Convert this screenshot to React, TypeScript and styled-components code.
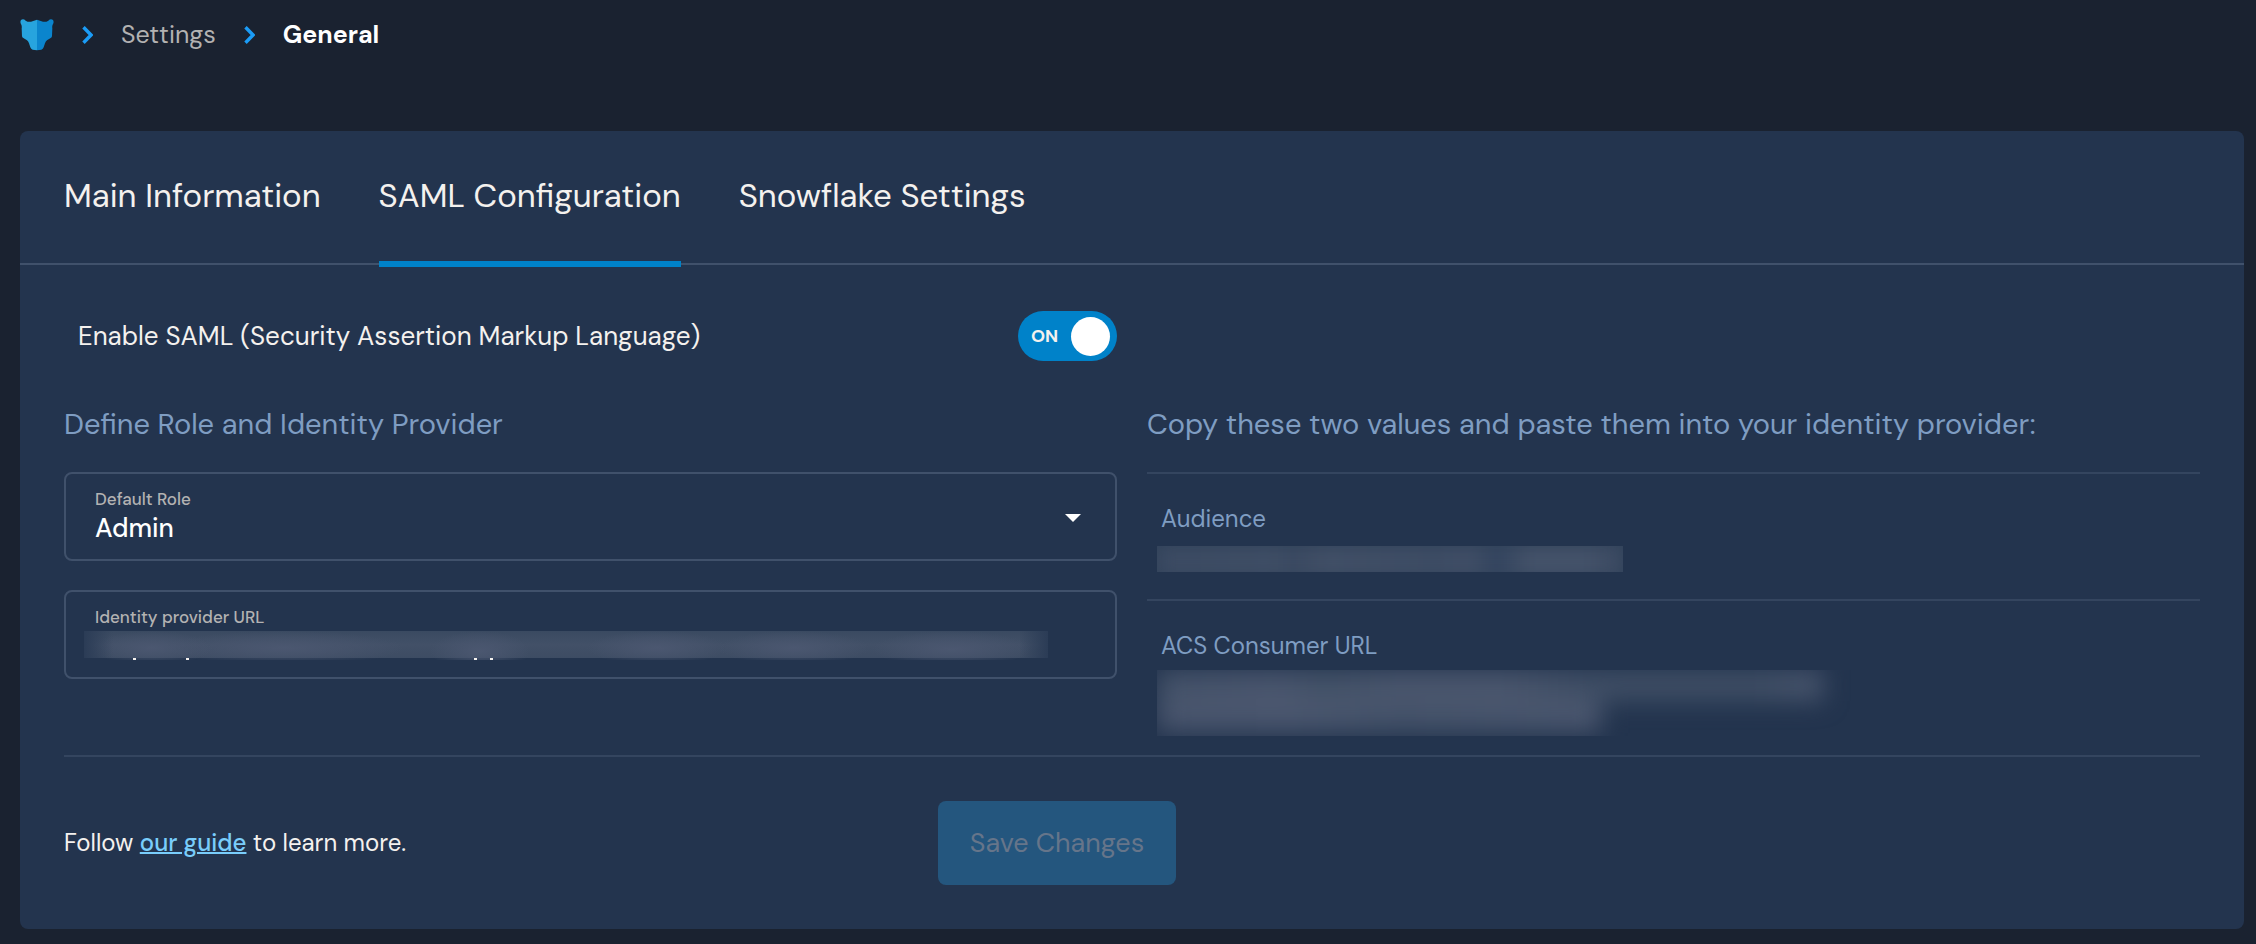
import React, { useState } from 'react';
import styled, { createGlobalStyle } from 'styled-components';

const color = {
  page: '#1a2230',
  card: '#23344e',
  line: '#34455f',
  border: '#40516b',
  accent: '#0082c9',
  chevron: '#1b9cf6',
  text: '#f4f1ee',
  muted: '#b3b2b2',
  heading: '#7f9dc2',
  link: '#79cdfb',
};

const GlobalStyle = createGlobalStyle`
  *, *::before, *::after { box-sizing: border-box; }
  body {
    margin: 0;
    background: ${color.page};
    color: ${color.text};
    font-family: "DM Sans", Inter, "Liberation Sans", sans-serif;
  }
  button, input, select { font: inherit; color: inherit; }
`;

const Page = styled.div`
  min-height: 100vh;
  padding: 0 12px 15px 20px;
`;

const Breadcrumb = styled.nav`
  display: flex;
  align-items: center;
  gap: 28px;
  height: 70px;
  margin-bottom: 61px;
  font-size: 25px;
  line-height: 32px;
`;

const Crumb = styled.a`
  display: flex;
  color: ${color.muted};
  text-decoration: none;
`;

const CurrentCrumb = styled.span`
  color: #fff;
  font-weight: 700;
`;

const Card = styled.main`
  background: ${color.card};
  border-radius: 8px;
`;

const Tabs = styled.div`
  display: flex;
  gap: 58px;
  padding: 0 44px;
  border-bottom: 2px solid ${color.border};
`;

const Tab = styled.button<{ $active: boolean }>`
  margin: 0 0 -4px;
  padding: 45px 0;
  border: 0;
  border-bottom: 6px solid ${(p) => (p.$active ? color.accent : 'transparent')};
  background: none;
  font-size: 33px;
  line-height: 40px;
  white-space: nowrap;
  cursor: pointer;
`;

const Columns = styled.div`
  display: grid;
  grid-template-columns: 1fr 1fr;
  column-gap: 30px;
  padding: 0 44px;
`;

const EnableRow = styled.div`
  display: flex;
  align-items: center;
  justify-content: space-between;
  padding: 46px 0 44px 14px;
  font-size: 26px;
  line-height: 34px;
`;

const Switch = styled.span`
  position: relative;
  display: flex;
  align-items: center;
  justify-content: space-between;
  width: 99px;
  height: 50px;
  padding: 0 7px 0 13px;
  border-radius: 25px;
  background: ${color.accent};
  font-size: 18px;
  font-weight: 700;
`;

const SwitchInput = styled.input`
  position: absolute;
  inset: 0;
  width: 100%;
  height: 100%;
  margin: 0;
  opacity: 0;
  cursor: pointer;
`;

const Knob = styled.span`
  width: 39px;
  height: 39px;
  border-radius: 50%;
  background: #fff;
`;

const Section = styled.section`
  min-width: 0;
`;

const SectionTitle = styled.h2`
  margin: 0 0 29px;
  color: ${color.heading};
  font-size: 29px;
  font-weight: 400;
  line-height: 38px;
`;

const Fields = styled.div`
  display: grid;
  gap: 29px;
`;

const Field = styled.div`
  position: relative;
  display: flex;
  flex-direction: column;
  gap: 4px;
  height: 89px;
  padding-top: 15px;
  border: 2px solid ${color.border};
  border-radius: 8px;
`;

const FieldLabel = styled.label`
  padding-left: 29px;
  color: ${color.muted};
  font-size: 17px;
  font-weight: 500;
  line-height: 20px;
`;

const Select = styled.select`
  appearance: none;
  width: 100%;
  height: 30px;
  padding: 0 60px 0 29px;
  border: 0;
  background: none;
  color: #fff;
  font-size: 26px;
  font-weight: 500;
  line-height: 30px;
`;

const Caret = styled.svg`
  position: absolute;
  top: 40px;
  right: 34px;
  pointer-events: none;
`;

const haze = '#4b5770';
const descender = `linear-gradient(${color.text}, ${color.text})`;

const HiddenInput = styled.input`
  height: 29px;
  margin: 0 67px 0 18px;
  padding: 0;
  border: 0;
  background:
    ${descender} 49px 100% / 3px 2px no-repeat,
    ${descender} 102px 100% / 3px 2px no-repeat,
    ${descender} 390px 100% / 3px 2px no-repeat,
    ${descender} 406px 100% / 3px 2px no-repeat,
    linear-gradient(90deg, #2b3c56, #40506900 3%, #40506900 97%, #2b3c56) 0 0 / 100% 27px no-repeat,
    radial-gradient(closest-side, ${haze}, #4b577000) 1% 0 / 120px 34px no-repeat,
    radial-gradient(closest-side, ${haze}, #4b577000) 11% 0 / 240px 34px no-repeat,
    radial-gradient(closest-side, ${haze}, #4b577000) 40% 0 / 100px 40px no-repeat,
    radial-gradient(closest-side, ${haze}, #4b577000) 61% 0 / 140px 34px no-repeat,
    radial-gradient(closest-side, ${haze}, #4b577000) 78% 0 / 150px 34px no-repeat,
    radial-gradient(closest-side, ${haze}, #4b577000) 98% 0 / 160px 36px no-repeat,
    linear-gradient(#3a4a61, #425067 50%, #3d4c63) 0 0 / 100% 27px no-repeat;
`;

const Value = styled.div`
  padding: 30px 0 0 10px;
  border-top: 2px solid ${color.line};
`;

const ValueLabel = styled.h3`
  margin: 0;
  padding-left: 4px;
  color: ${color.heading};
  font-size: 24px;
  font-weight: 400;
  line-height: 30px;
`;

const Redacted = styled.div<{ $width: number; $lines: number }>`
  width: ${(p) => p.$width}px;
  max-width: 100%;
  height: ${(p) => (p.$lines > 1 ? 66 : 26)}px;
  margin: ${(p) => (p.$lines > 1 ? '9px 0 19px' : '12px 0 27px')};
  overflow: hidden;
  background: ${(p) => (p.$lines > 1 ? 'none' : '#31425a')};
`;

const Smear = styled.div<{ $width: string; $tone: string }>`
  width: ${(p) => p.$width};
  height: 31px;
  background: ${(p) => p.$tone};
`;

const SmearGroup = styled.div<{ $radius: number }>`
  filter: blur(${(p) => p.$radius}px);
`;

const Footer = styled.footer`
  display: grid;
  grid-template-columns: 9fr 13fr;
  align-items: center;
  justify-items: start;
  margin: 0 44px;
  padding: 44px 0;
  border-top: 2px solid ${color.line};
  font-size: 24px;
  line-height: 32px;
`;

const Hint = styled.p`
  margin: 0;
`;

const GuideLink = styled.a`
  color: ${color.link};
  font-weight: 500;
  text-decoration-thickness: 2px;
`;

const SaveButton = styled.button`
  height: 84px;
  padding: 0 32px;
  border: 0;
  border-radius: 8px;
  background: #24567e;
  color: #66758a;
  font-size: 27px;
  line-height: 36px;
`;

const Logo = () => (
  <svg width="34" height="32" viewBox="29 33 102 96" role="img" aria-label="Home">
    <path
      fill="#27a4de"
      d="M80 35 62 41 Q54 43 46 38 Q39 31 32 36 Q28 42 33 50 Q35 54 34 61 L35 84 Q35 88 39 90 L50 97 Q54 100 56 106 L60 118 Q62 124 67 125 L80 127Z"
    />
    <path
      fill="#0b85cd"
      d="M80 35 98 41 Q106 43 114 38 Q121 31 128 36 Q132 42 127 50 Q125 54 126 61 L125 84 Q125 88 121 90 L110 97 Q106 100 104 106 L100 118 Q98 124 93 125 L80 127Z"
    />
  </svg>
);

const Chevron = () => (
  <svg width="11" height="18" viewBox="0 0 11 18" aria-hidden="true">
    <path d="M1.5 1.3 9 9 1.5 16.7" fill="none" stroke={color.chevron} strokeWidth="3.4" />
  </svg>
);

const tabs = ['Main Information', 'SAML Configuration', 'Snowflake Settings'];

export default function App() {
  const [active, setActive] = useState(tabs[1]);
  const [enabled, setEnabled] = useState(true);

  return (
    <>
      <GlobalStyle />
      <Page>
        <Breadcrumb aria-label="Breadcrumb">
          <Crumb href="#home"><Logo /></Crumb>
          <Chevron />
          <Crumb href="#settings">Settings</Crumb>
          <Chevron />
          <CurrentCrumb aria-current="page">General</CurrentCrumb>
        </Breadcrumb>

        <Card>
          <Tabs role="tablist">
            {tabs.map((name) => (
              <Tab
                key={name}
                type="button"
                role="tab"
                aria-selected={name === active}
                $active={name === active}
                onClick={() => setActive(name)}
              >
                {name}
              </Tab>
            ))}
          </Tabs>

          <Columns>
            <EnableRow>
              <label htmlFor="saml">Enable SAML (Security Assertion Markup Language)</label>
              <Switch>
                {enabled ? 'ON' : null}
                <Knob />
                {enabled ? null : 'OFF'}
                <SwitchInput
                  id="saml"
                  type="checkbox"
                  role="switch"
                  checked={enabled}
                  onChange={(e) => setEnabled(e.target.checked)}
                />
              </Switch>
            </EnableRow>
          </Columns>

          <Columns>
            <Section>
              <SectionTitle>Define Role and Identity Provider</SectionTitle>
              <Fields>
                <Field>
                  <FieldLabel htmlFor="role">Default Role</FieldLabel>
                  <Select id="role" defaultValue="Admin">
                    <option>Admin</option>
                  </Select>
                  <Caret width="16" height="8" viewBox="0 0 16 8" aria-hidden="true">
                    <path d="M0 0h16L8 8z" fill="#fff" />
                  </Caret>
                </Field>
                <Field>
                  <FieldLabel htmlFor="idp-url">Identity provider URL</FieldLabel>
                  <HiddenInput id="idp-url" type="text" />
                </Field>
              </Fields>
            </Section>

            <Section>
              <SectionTitle>Copy these two values and paste them into your identity provider:</SectionTitle>
              <Value>
                <ValueLabel>Audience</ValueLabel>
                <Redacted $width={466} $lines={1}>
                  <SmearGroup $radius={8}>
                    <Smear
                      $width="100%"
                      $tone="linear-gradient(90deg, #3b4a62, #3f4e65 25%, #3a4961 29%, #414f66 36%, #3d4c64 60%, #404e66 67%, #33445e 73%, #445269 80%, #445269 92%, #3a4961)"
                    />
                  </SmearGroup>
                </Redacted>
              </Value>
              <Value>
                <ValueLabel>ACS Consumer URL</ValueLabel>
                <Redacted $width={694} $lines={2}>
                  <SmearGroup $radius={12}>
                    <Smear
                      $width="96%"
                      $tone="linear-gradient(90deg, #445269, #4a566e 18%, #435268 25%, #4a566d 36%, #4a566d 52%, #3f4e65 64%, #3f4e65 90%, #48556d)"
                    />
                    <Smear
                      $width="64%"
                      $tone="linear-gradient(90deg, #49556d, #4b576f 30%, #45536a 55%, #4b576f)"
                    />
                  </SmearGroup>
                </Redacted>
              </Value>
            </Section>
          </Columns>

          <Footer>
            <Hint>
              Follow <GuideLink href="#guide">our guide</GuideLink> to learn more.
            </Hint>
            <SaveButton type="button" disabled>Save Changes</SaveButton>
          </Footer>
        </Card>
      </Page>
    </>
  );
}
